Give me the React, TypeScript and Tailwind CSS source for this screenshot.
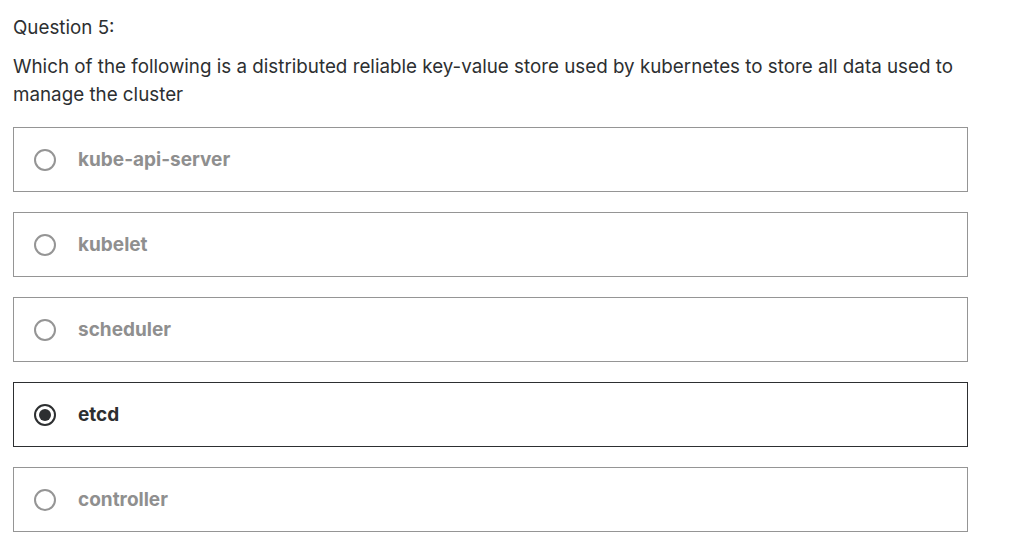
const options = ["kube-api-server", "kubelet", "scheduler", "etcd", "controller"];
const selected = "etcd";

function Radio({ checked }: { checked: boolean }) {
  return (
    <span
      className={
        "flex h-[22px] w-[22px] shrink-0 items-center justify-center rounded-full border-2 " +
        (checked ? "border-[#2d2f31]" : "border-[#959595]")
      }
    >
      {checked && <span className="h-[12px] w-[12px] rounded-full bg-[#2d2f31]" />}
    </span>
  );
}

export default function App() {
  return (
    <div className="min-h-screen bg-white px-[13px] pt-[15px] font-['Inter',sans-serif] text-[#2d2f31]">
      <div className="text-[18.8px] leading-[26px]">Question 5:</div>
      <p className="mt-[12px] max-w-[950px] text-[18.8px] leading-[28px]">
        Which of the following is a distributed reliable key-value store used by kubernetes to store all data used to
        manage the cluster
      </p>
      <ul className="mt-[18px] flex w-[955px] flex-col gap-[20px]">
        {options.map((o) => {
          const checked = o === selected;
          return (
            <li
              key={o}
              className={
                "flex h-[65px] items-center gap-[22px] border px-[20px] " +
                (checked ? "border-[#2d2f31]" : "border-[#959595]")
              }
            >
              <Radio checked={checked} />
              <span
                className={
                  "pt-[2px] text-[19px] font-bold " + (checked ? "text-[#2d2f31]" : "text-[#8f8f8f]")
                }
              >
                {o}
              </span>
            </li>
          );
        })}
      </ul>
    </div>
  );
}
